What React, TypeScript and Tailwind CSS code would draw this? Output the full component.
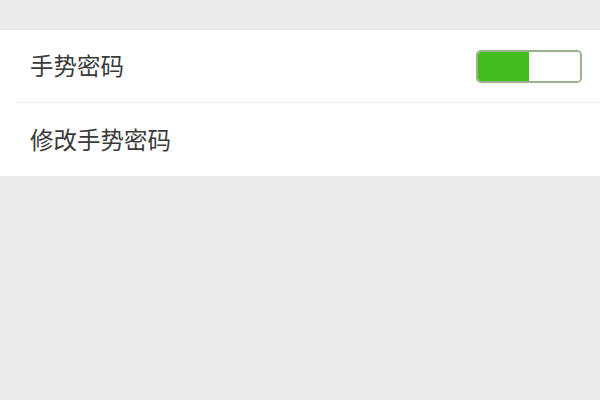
import React, { useState } from "react";

const Row = ({ label, children, last }: { label: string; children?: React.ReactNode; last?: boolean }) => (
  <div className="pl-4">
    <div
      className={`flex items-center justify-between h-[73px] pl-[14px] pr-[18px] ${
        last ? "" : "border-b border-[#ececec]"
      }`}
    >
      <span className="text-[23.5px] text-[#3a3a3a]">{label}</span>
      {children}
    </div>
  </div>
);

const App = () => {
  const [on, setOn] = useState(true);

  return (
    <div
      className="w-[600px] h-[400px] bg-[#ebebeb] pt-[30px]"
      style={{ fontFamily: '"Noto Sans CJK SC", "Noto Sans", sans-serif' }}
    >
      <div className="bg-white">
        <Row label="手势密码">
          <button
            onClick={() => setOn(!on)}
            className="w-[106px] h-[33px] rounded-[5px] border-2 border-[#9bb38c] flex overflow-hidden"
          >
            <div className={`w-1/2 h-full ${on ? "bg-[#44bb1f]" : "bg-white"}`}></div>
            <div className={`w-1/2 h-full ${on ? "bg-white" : "bg-[#44bb1f]"}`}></div>
          </button>
        </Row>
        <Row label="修改手势密码" last />
      </div>
    </div>
  );
};

export default App;
